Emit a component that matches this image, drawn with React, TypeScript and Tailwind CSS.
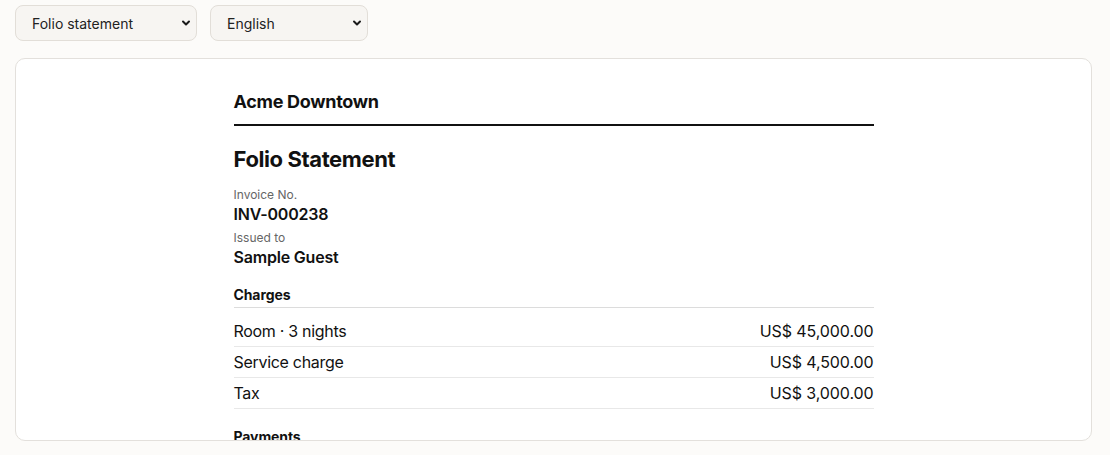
import React from "react";

function Select({ value, options, width }: { value: string; options: string[]; width: string }) {
  return (
    <div className={`relative h-[36px] ${width}`}>
      <select
        defaultValue={value}
        className="h-full w-full appearance-none rounded-[8px] border border-[#e2ded8] bg-[#f7f5f2] pl-[16px] pr-[28px] text-[14px] text-[#222] outline-none"
        style={{ fontFamily: "Inter, 'Noto Sans', sans-serif" }}
      >
        {options.map((o) => (
          <option key={o}>{o}</option>
        ))}
      </select>
      <svg
        className="pointer-events-none absolute right-[6px] top-1/2 -translate-y-1/2"
        width="10"
        height="10"
        viewBox="0 0 10 10"
        fill="none"
      >
        <path d="M2 3.5 L5 6.5 L8 3.5" stroke="#1a1a1a" strokeWidth="2" strokeLinecap="round" strokeLinejoin="round" />
      </svg>
    </div>
  );
}

const charges = [
  ["Room · 3 nights", "US$ 45,000.00"],
  ["Service charge", "US$ 4,500.00"],
  ["Tax", "US$ 3,000.00"],
];

export default function App() {
  return (
    <div
      className="flex h-[455px] flex-col bg-[#fcfbf9] pb-[14px] pl-[15px] pr-[18px] pt-[5px] text-[#111]"
      style={{ fontFamily: "Inter, 'Noto Sans', sans-serif" }}
    >
      <div className="mb-[17px] flex gap-[13px]">
        <Select value="Folio statement" options={["Folio statement", "Receipt", "Invoice"]} width="w-[182px]" />
        <Select value="English" options={["English", "日本語"]} width="w-[158px]" />
      </div>
      <div className="min-h-0 flex-1 overflow-hidden rounded-[10px] border border-[#e3e0dc] bg-white">
        <div className="mx-auto max-w-[640px] pt-[29px]">
          <div className="border-b-2 border-[#111] pb-[9px] text-[18px] font-bold leading-[27px] tracking-[-0.3px]">Acme Downtown</div>
          <div className="mt-[19px] text-[22px] font-bold leading-[28px] tracking-[-0.4px]">Folio Statement</div>
          <div className="mt-[14px] text-[12px] leading-[16px] text-[#666]">Invoice No.</div>
          <div className="text-[16px] font-semibold leading-[22px] tracking-[-0.2px]">INV-000238</div>
          <div className="mt-[5px] text-[12px] leading-[16px] text-[#666]">Issued to</div>
          <div className="text-[16px] font-semibold leading-[22px] tracking-[-0.2px]">Sample Guest</div>
          <div className="mt-[17px] border-b border-[#dcdcdc] pb-[2px] text-[14px] font-bold leading-[20px] tracking-[-0.1px]">Charges</div>
          <div className="mt-[8px]">
            {charges.map(([label, amount]) => (
              <div key={label} className="flex justify-between border-b border-[#e8e8e8] py-[4px] text-[16px] leading-[22px] tracking-[-0.3px]">
                <span>{label}</span>
                <span className="tracking-[-0.1px]">{amount}</span>
              </div>
            ))}
          </div>
          <div className="mt-[18px] border-b border-[#dcdcdc] pb-[2px] text-[14px] font-bold leading-[20px] tracking-[-0.1px]">Payments</div>
        </div>
      </div>
    </div>
  );
}
